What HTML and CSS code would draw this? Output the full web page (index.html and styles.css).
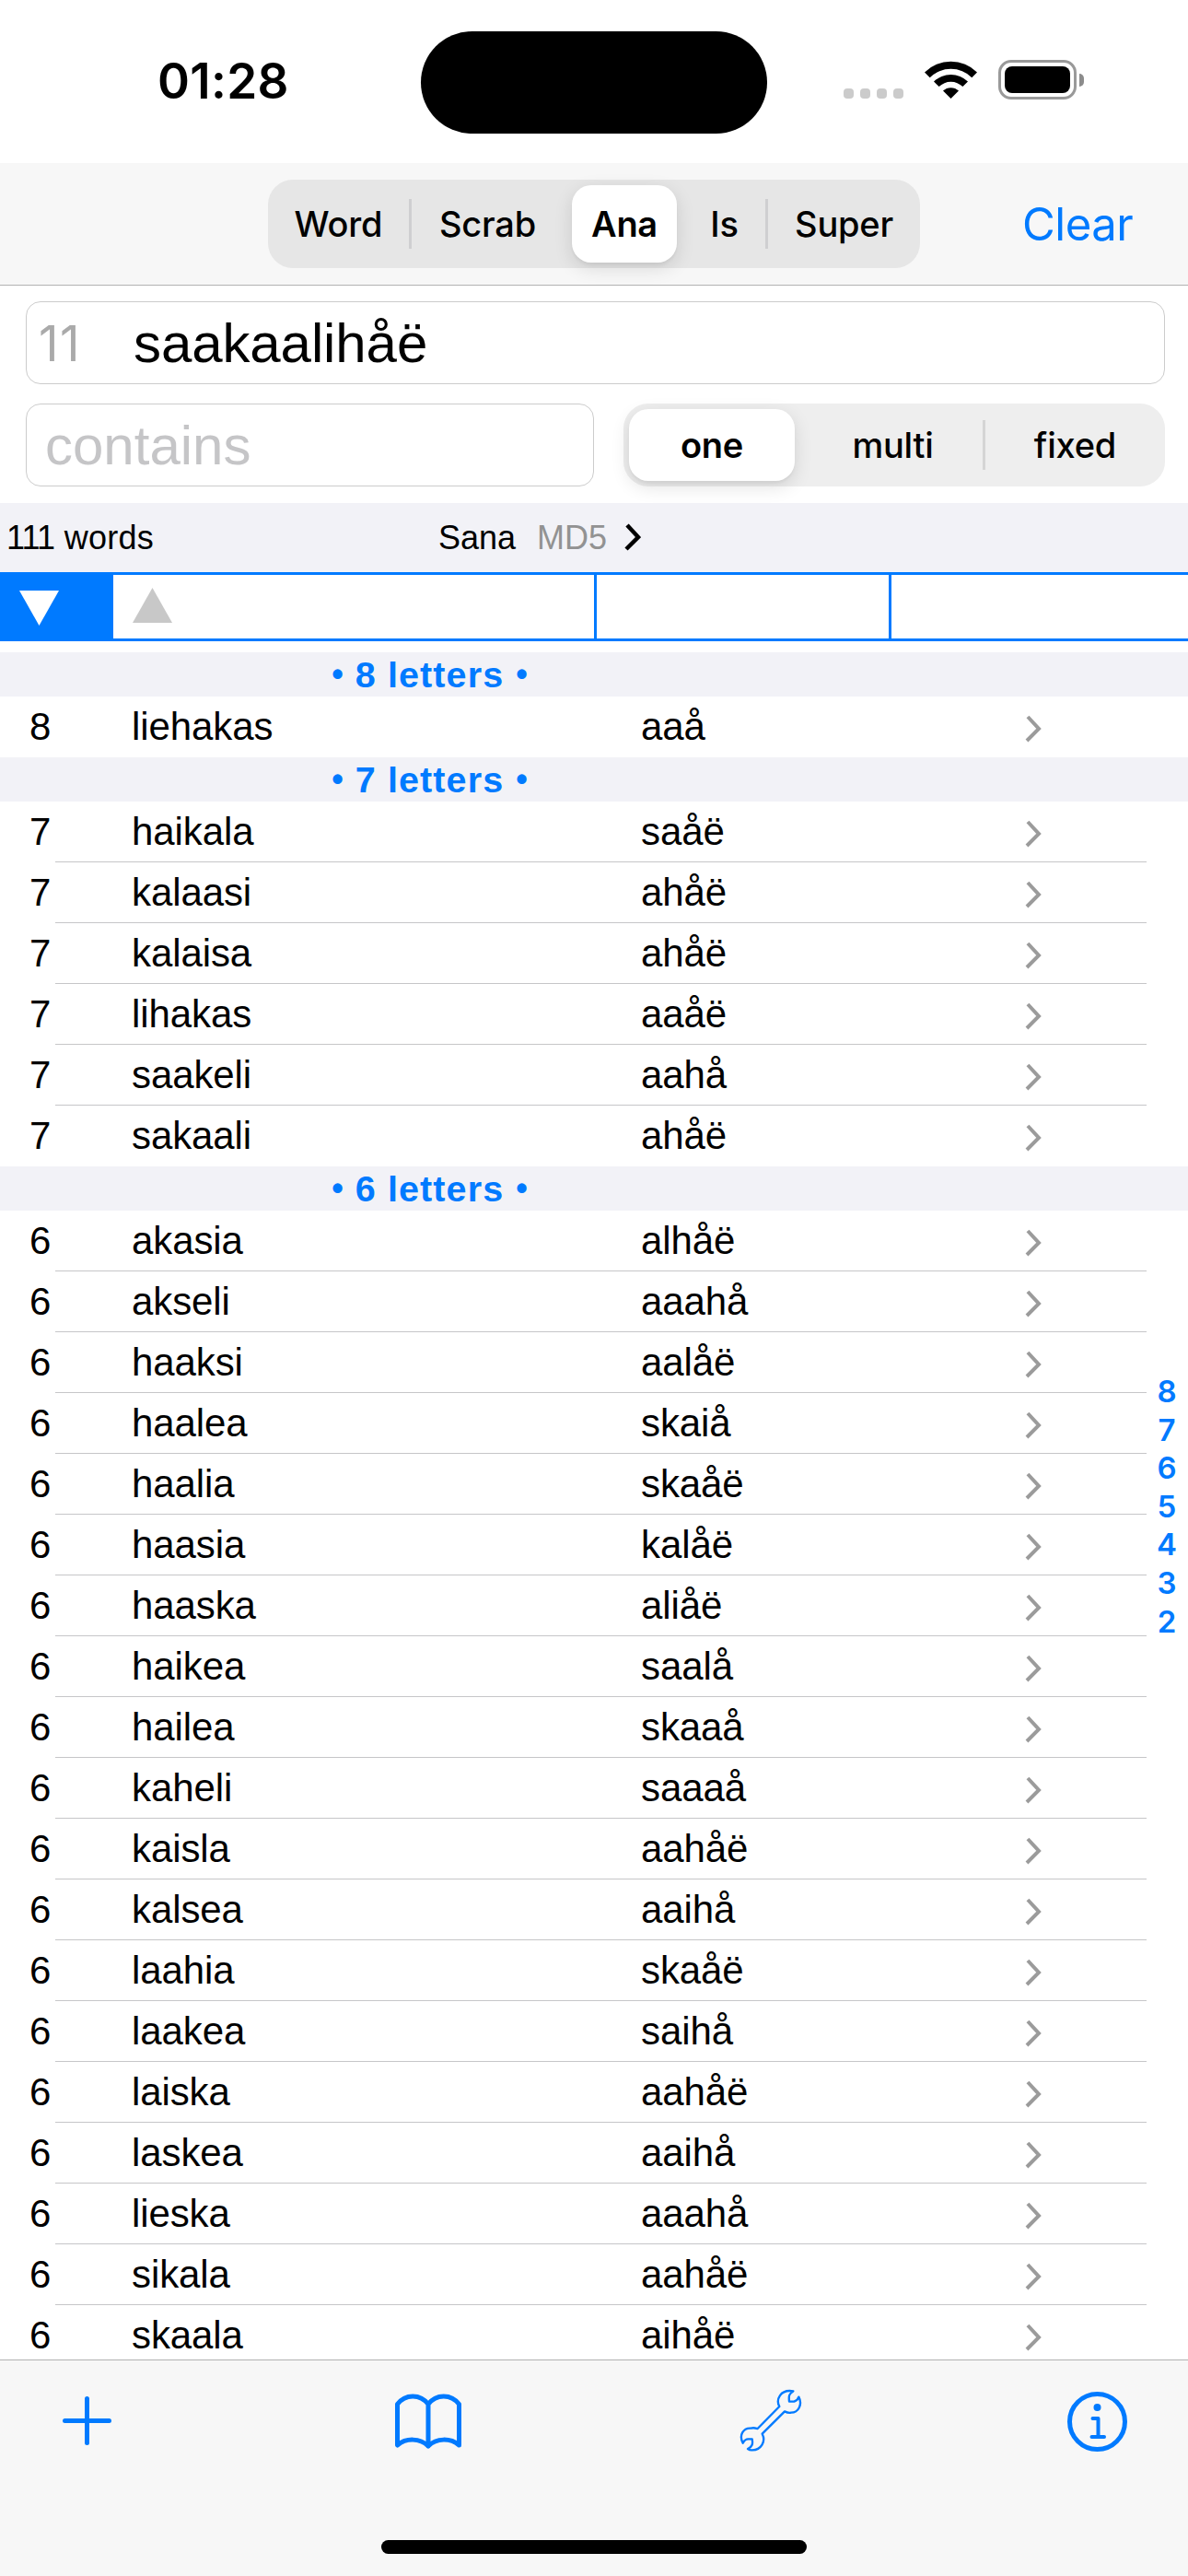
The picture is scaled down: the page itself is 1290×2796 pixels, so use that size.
FILE: index.html
```html
<!DOCTYPE html>
<html lang="fi">
<head>
	<meta charset="UTF-8">
	<title>Sana</title>
	<link rel="stylesheet" href="styles.css">
</head>
<body>

	<div id="app">
		<div class="status">
			<span class="time">01:28</span>
			<div class="island"></div>
			<div class="dots"><i></i><i></i><i></i><i></i></div>
			<svg class="wifi" viewBox="0 0 57 42">
				<path d="M0 13.5A40.5 40.5 0 0 1 57 13.5L51.300 19.200A32.500 32.500 0 0 0 5.700 19.200Z"/>
				<path d="M10 23.500A26.500 26.500 0 0 1 47 23.500L41.400 29.100A18.500 18.500 0 0 0 15.600 29.100Z"/>
				<path d="M20 33.500A12.500 12.500 0 0 1 37 33.500L28.500 42Z"/>
			</svg>
			<div class="battery"><i></i></div>
			<div class="nub"></div>
		</div>

		<div class="nav">
			<div class="seg seg_top">
				<span class="s1">Word</span>
				<span class="s2">Scrab</span>
				<span class="s3 on">Ana</span>
				<span class="s4">Is</span>
				<span class="s5">Super</span>
			</div>
			<a class="clear">Clear</a>
		</div>

		<div class="search">
			<div class="field letters">
				<span class="count">11</span>
				<span class="value">saakaalihåë</span>
			</div>
			<div class="line">
				<div class="field contains">contains</div>
				<div class="seg seg_mode">
					<span class="m1 on">one</span>
					<span class="m2">multi</span>
					<span class="m3">fixed</span>
				</div>
			</div>
		</div>

		<div class="info">
			<span class="total"><span class="num">111</span> words</span>
			<span class="sana">Sana</span>
			<span class="md5">MD5</span>
			<svg viewBox="0 0 18 30"><path d="M3 2L15 15L2 28"/></svg>
		</div>

		<div class="sort">
			<div class="c1"><svg viewBox="0 0 43 38"><path d="M0 0H43L21.500 38Z"/></svg></div>
			<div class="c2"><svg viewBox="0 0 43 38"><path d="M0 38H43L21.500 0Z"/></svg></div>
			<div class="c3"></div>
			<div class="c4"></div>
		</div>

		<svg class="defs">
			<symbol id="arr" viewBox="0 0 18 30"><path d="M3 2L15 15L2 28"/></symbol>
		</svg>

		<div class="list">
			<h2><i>•</i> 8 letters <i>•</i></h2>
			<ul>
				<li><b>8</b><span>liehakas</span><em>aaå</em><svg><use href="#arr"/></svg></li>
			</ul>
			<h2><i>•</i> 7 letters <i>•</i></h2>
			<ul>
				<li><b>7</b><span>haikala</span><em>saåë</em><svg><use href="#arr"/></svg></li>
				<li><b>7</b><span>kalaasi</span><em>ahåë</em><svg><use href="#arr"/></svg></li>
				<li><b>7</b><span>kalaisa</span><em>ahåë</em><svg><use href="#arr"/></svg></li>
				<li><b>7</b><span>lihakas</span><em>aaåë</em><svg><use href="#arr"/></svg></li>
				<li><b>7</b><span>saakeli</span><em>aahå</em><svg><use href="#arr"/></svg></li>
				<li><b>7</b><span>sakaali</span><em>ahåë</em><svg><use href="#arr"/></svg></li>
			</ul>
			<h2><i>•</i> 6 letters <i>•</i></h2>
			<ul>
				<li><b>6</b><span>akasia</span><em>alhåë</em><svg><use href="#arr"/></svg></li>
				<li><b>6</b><span>akseli</span><em>aaahå</em><svg><use href="#arr"/></svg></li>
				<li><b>6</b><span>haaksi</span><em>aalåë</em><svg><use href="#arr"/></svg></li>
				<li><b>6</b><span>haalea</span><em>skaiå</em><svg><use href="#arr"/></svg></li>
				<li><b>6</b><span>haalia</span><em>skaåë</em><svg><use href="#arr"/></svg></li>
				<li><b>6</b><span>haasia</span><em>kalåë</em><svg><use href="#arr"/></svg></li>
				<li><b>6</b><span>haaska</span><em>aliåë</em><svg><use href="#arr"/></svg></li>
				<li><b>6</b><span>haikea</span><em>saalå</em><svg><use href="#arr"/></svg></li>
				<li><b>6</b><span>hailea</span><em>skaaå</em><svg><use href="#arr"/></svg></li>
				<li><b>6</b><span>kaheli</span><em>saaaå</em><svg><use href="#arr"/></svg></li>
				<li><b>6</b><span>kaisla</span><em>aahåë</em><svg><use href="#arr"/></svg></li>
				<li><b>6</b><span>kalsea</span><em>aaihå</em><svg><use href="#arr"/></svg></li>
				<li><b>6</b><span>laahia</span><em>skaåë</em><svg><use href="#arr"/></svg></li>
				<li><b>6</b><span>laakea</span><em>saihå</em><svg><use href="#arr"/></svg></li>
				<li><b>6</b><span>laiska</span><em>aahåë</em><svg><use href="#arr"/></svg></li>
				<li><b>6</b><span>laskea</span><em>aaihå</em><svg><use href="#arr"/></svg></li>
				<li><b>6</b><span>lieska</span><em>aaahå</em><svg><use href="#arr"/></svg></li>
				<li><b>6</b><span>sikala</span><em>aahåë</em><svg><use href="#arr"/></svg></li>
				<li><b>6</b><span>skaala</span><em>aihåë</em><svg><use href="#arr"/></svg></li>
			</ul>
			<div class="index"><a>8</a><a>7</a><a>6</a><a>5</a><a>4</a><a>3</a><a>2</a></div>
		</div>

		<div class="toolbar">
			<div class="icons">
				<svg class="plus" viewBox="0 0 53 53"><path d="M26.500 2.500V50.500M2.500 26.500H50.500"/></svg>
				<svg class="book" viewBox="0 0 72 60">
					<path d="M2.500 56V11.500C11 0 27.500 0 36 11.500C44.500 0 61 0 69.500 11.500V56C60 48 45 48 36 57C27 48 12 48 2.500 56ZM36 11.500V57"/>
				</svg>
				<svg class="wrench" viewBox="38 38 204 204">
					<path d="M213 45C199 52 198 62 200 79H216C225 76 229 71 231 64C244 88 230 115 206 115C197 117 189 113 185 111L112 184C125 209 108 237 80 237C74 238 69 236 65 233C80 226 82 217 79 201H66C56 201 53 207 49 214C35 188 51 164 75 166C85 163 92 166 97 167L168 95C156 73 170 38 213 45Z"/>
				</svg>
				<svg class="about" viewBox="0 0 65 65">
					<circle cx="32.500" cy="32.500" r="30"/>
					<circle class="dot" cx="32.500" cy="17" r="4"/>
					<path d="M27.500 29H33.500V49M26.500 49H40"/>
				</svg>
			</div>
			<div class="home"></div>
		</div>
	</div>

</body>
</html>
```
FILE: styles.css
```css
* {padding: 0; margin: 0; box-sizing: border-box;}
li {list-style: none;}
i, em {font-style: normal;}
body {background: #fff; color: #000; font-family: "Liberation Sans", Arial, sans-serif;}
svg {display: block; flex: none;}
.defs {width: 0; height: 0; position: absolute;}
#app {width: 1290px; height: 2796px; overflow: hidden; display: flex; flex-direction: column;}
#app > div {flex: none;}

.status {height: 177px; display: flex; padding-left: 171px;}
.status .time {width: 286px; padding-top: 56px; font: 600 53px/64px Inter, sans-serif; letter-spacing: .3px;}
.island {width: 376px; height: 111px; margin-top: 34px; border-radius: 56px; background: #000;}
.dots {display: flex; gap: 7px; margin: 96px 0 0 83px;}
.dots i {width: 11px; height: 11px; border-radius: 4px; background: #cbcbcb;}
.wifi {width: 57px; height: 42px; margin: 65px 0 0 23px;}
.battery {width: 85px; height: 43px; margin: 65px 0 0 23px; padding: 4px; border: 3px solid #999; border-radius: 14px;}
.battery i {display: block; height: 29px; border-radius: 8px; background: #000;}
.nub {width: 5px; height: 14px; margin: 80px 0 0 3px; border-radius: 0 5px 5px 0; background: #8c8c8c;}

.nav {height: 133px; padding: 18px 0 0 291px; display: flex; background: #f7f7f7; border-bottom: 1px solid #b2b2b2;}
.clear {margin: 0 0 0 111px; font: 400 49px/97px Inter, sans-serif; letter-spacing: -.5px; color: #007aff;}

.seg {display: flex; align-items: center; border-radius: 27px; font: 500 38px/1 Inter, sans-serif;}
.seg span {display: flex; align-items: center; justify-content: center; height: 54px; white-space: nowrap; letter-spacing: -.2px;}
.seg .on {background: #fff; border-radius: 21px; font-weight: 600; letter-spacing: -.3px; box-shadow: 0 6px 20px rgba(0,0,0,.12), 0 3px 3px rgba(0,0,0,.04);}
.seg_top {width: 708px; height: 96px; background: #e6e6e6;}
.seg_top .s1 {width: 156px; border-right: 3px solid #cfcfd1;}
.seg_top .s2 {width: 174px; padding-right: 9px;}
.seg_top .s3 {width: 114px; height: 84px;}
.seg_top .s4 {width: 99px; padding-left: 7px; border-right: 3px solid #cfcfd1;}
.seg_top .s5 {width: 165px;}
.seg_mode {width: 588px; height: 90px; padding-left: 6px; background: #eee;}
.seg_mode .m1 {width: 180px; height: 78px;}
.seg_mode .m2 {width: 207px; padding-left: 9px; border-right: 3px solid #d5d5d5;}
.seg_mode .m3 {width: 195px;}

.search {height: 236px; padding: 17px 25px 0 28px;}
.field {height: 90px; border: 1px solid #ccc; border-radius: 16px; font-size: 60px; line-height: 90px;}
.letters {display: flex;}
.count {width: 116px; padding-left: 13px; font: 400 53px/90px Inter, sans-serif; letter-spacing: 1.500px; color: #aaa;}
.value {letter-spacing: -.1px;}
.line {display: flex; justify-content: space-between; margin-top: 21px;}
.contains {width: 617px; padding-left: 20px; color: #c5c5c7;}

.info {height: 75px; display: flex; background: #f2f2f7; font-size: 36px; line-height: 76px;}
.total {width: 476px; padding-left: 7px; letter-spacing: .3px;}
.total .num {letter-spacing: -.8px;}
.sana {width: 107px;}
.md5 {width: 95px; color: #929292;}
.info svg {width: 18px; height: 30px; margin-top: 22px;}
.info path {fill: none; stroke: #000; stroke-width: 4.500;}

.sort {height: 75px; display: flex; border: solid #007aff; border-width: 3px 0;}
.sort svg {width: 43px; height: 38px;}
.sort .c1 {width: 123px; padding: 17px 0 0 21px; background: #007aff; fill: #fff;}
.sort .c2 {width: 525px; padding: 14px 0 0 21px; border-right: 3px solid #007aff; fill: #c8c8c8;}
.sort .c3 {width: 320px; border-right: 3px solid #007aff;}

.list {height: 1865px; padding-top: 12px; position: relative; overflow: hidden;}
.list h2 {height: 48px; display: flex; justify-content: center; gap: 13px; padding-right: 357px; background: #f2f2f7; color: #007aff; font-size: 39.500px; line-height: 48px; letter-spacing: 1.100px;}
.list h2 i {font-size: 36px; letter-spacing: 0;}
.list li {height: 66px; display: flex; font-size: 42px; line-height: 66px; letter-spacing: -.1px; background: linear-gradient(#c6c6c8, #c6c6c8) no-repeat 60px 100% / 1185px 1px;}
.list li:last-child {background: none;}
.list b {width: 143px; padding-left: 32px; font-weight: normal;}
.list span {width: 553px;}
.list em {width: 417px;}
.list li svg {width: 18px; height: 30px; margin-top: 20px; fill: none; stroke: #9b9b9b; stroke-width: 4;}
.index {position: absolute; right: 11px; top: 794px; width: 24px; text-align: center; font: 600 33px/41.600px Inter, sans-serif; color: #007aff;}
.index a {display: block;}

.toolbar {height: 235px; background: #f7f7f7; border-top: 1px solid #b2b2b2;}
.icons {height: 195px; padding: 31px 0 0 68px; display: flex; fill: none; stroke: #007aff; stroke-width: 5; stroke-linecap: round; stroke-linejoin: round;}
.plus {width: 53px; height: 53px; margin-top: 8px;}
.book {width: 72px; height: 60px; margin: 5px 0 0 308px;}
.wrench {width: 68px; height: 68px; margin-left: 302px; stroke-width: 7;}
.about {width: 65px; height: 65px; margin: 3px 0 0 288px;}
.about .dot {fill: #007aff; stroke: none;}
.about path {stroke-width: 4;}
.home {width: 462px; height: 15px; margin: 0 auto; border-radius: 8px; background: #000;}
```
